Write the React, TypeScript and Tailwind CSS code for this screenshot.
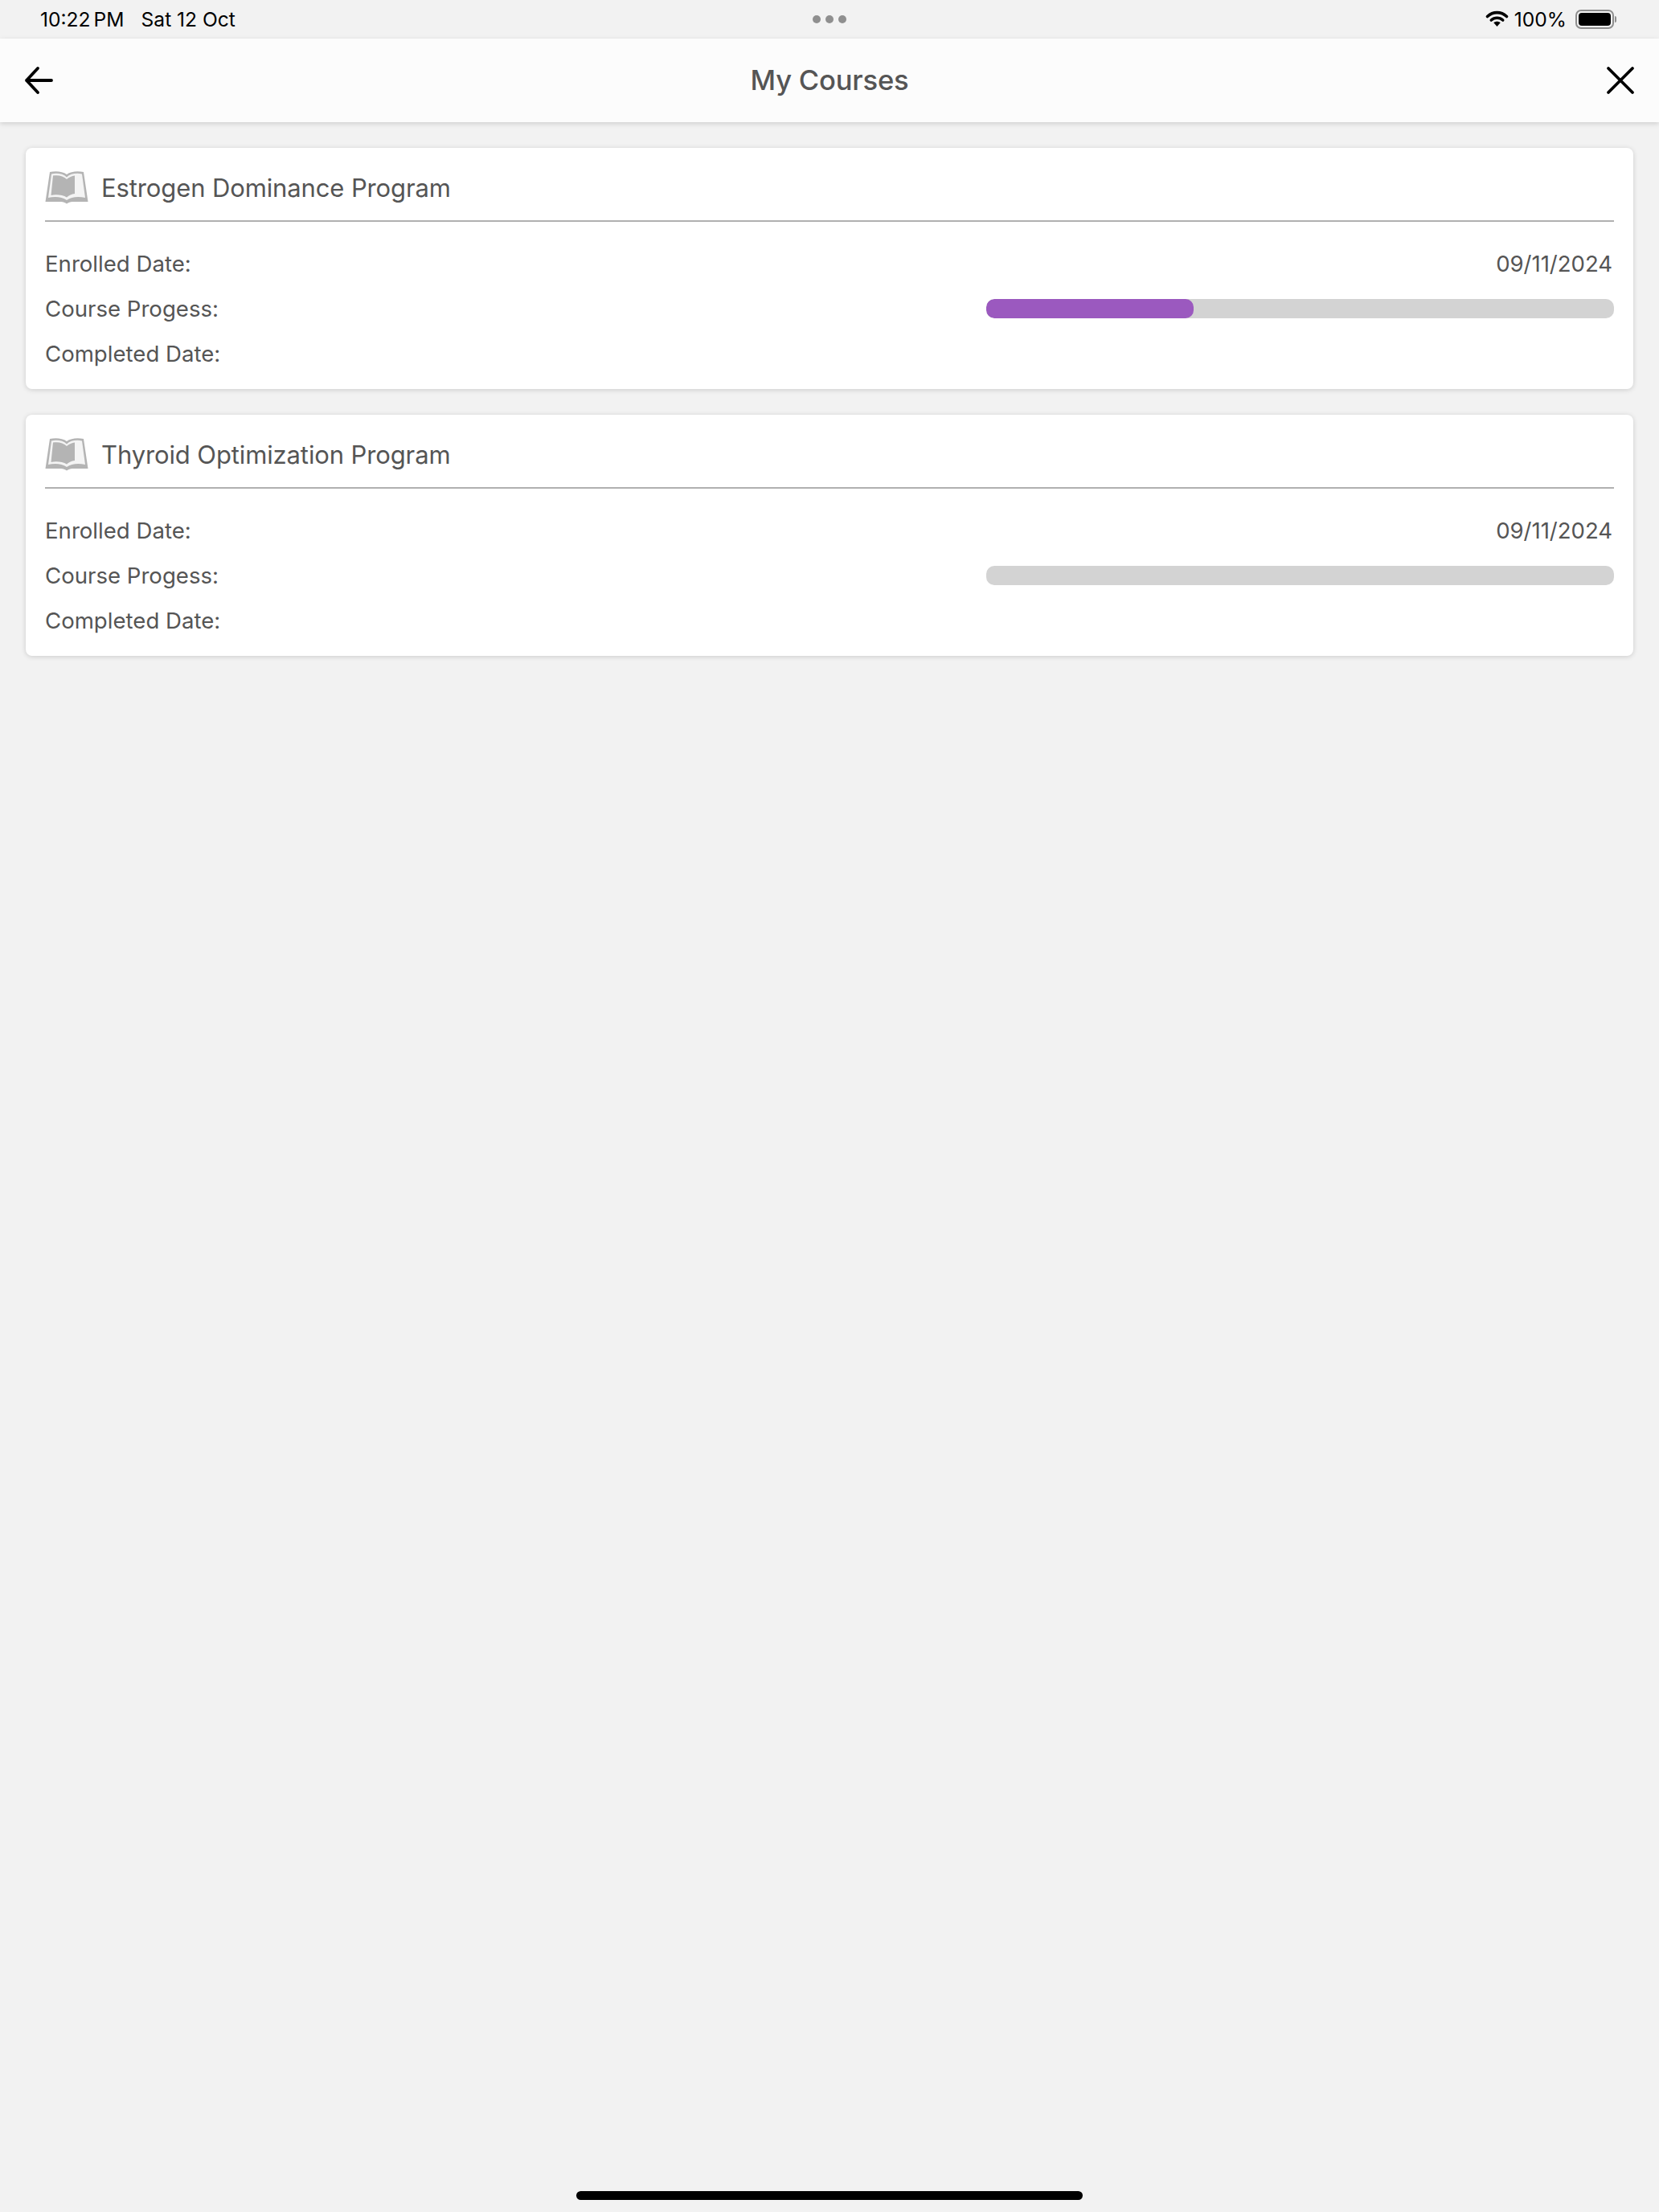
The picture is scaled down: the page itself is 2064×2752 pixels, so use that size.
const courses = [
  { title: "Estrogen Dominance Program", enrolled: "09/11/2024", progress: 33 },
  { title: "Thyroid Optimization Program", enrolled: "09/11/2024", progress: 0 },
];

function BookIcon() {
  return (
    <svg width="54" height="42" viewBox="0 0 54 42" className="mt-[5px] shrink-0">
      <path
        d="M6 2C13 0.5 22 1 27 5C32 1 41 0.5 48 2L53.5 39H34C31.5 39 29 40 27 41.5C25 40 22.5 39 20 39H0.5Z"
        fill="#b4b4b4"
      />
      <path
        d="M8 4.5C14.5 3 22.5 4 27 8.5C31.5 4 39.5 3 46 4.5L50 34C42 32 33 32.5 27 37C21 32.5 12 32 4 34Z"
        fill="#f4f4f4"
      />
      <path
        d="M10 6.5C16 5.5 23 6.5 27 11C30 8.5 33.5 7 37 6.5V29C33 29.5 30 31 27 33.5C22 30.5 14 29.5 7.5 31Z"
        fill="#b4b4b4"
      />
    </svg>
  );
}

function StatusBar() {
  return (
    <div className="relative flex h-12 items-center justify-between pl-[50px] pr-[53px] text-[24.6px] text-black">
      <div className="flex gap-[21px]">
        <span>
          10:22<span className="ml-[4px]">PM</span>
        </span>
        <span>Sat 12 Oct</span>
      </div>
      <div className="absolute left-[1011px] top-[19px] flex gap-[6px]">
        <span className="h-[10px] w-[10px] rounded-full bg-[#8f8f8f]" />
        <span className="h-[10px] w-[10px] rounded-full bg-[#8f8f8f]" />
        <span className="h-[10px] w-[10px] rounded-full bg-[#8f8f8f]" />
      </div>
      <div className="flex items-center gap-[7px]">
        <svg width="29" height="21" viewBox="0 0 28 21">
          <path d="M2 7.5C9 1 19 1 26 7.5" fill="none" stroke="#000" strokeWidth="3.6" strokeLinecap="round" />
          <path d="M6.8 12C11 8.3 17 8.3 21.2 12" fill="none" stroke="#000" strokeWidth="3.6" strokeLinecap="round" />
          <path d="M9.8 15.2C12.2 13.2 15.8 13.2 18.2 15.2L14 20Z" fill="#000" />
        </svg>
        <span className="mr-[4px]">100%</span>
        <div className="flex items-center gap-[1px]">
          <div className="flex h-[24px] w-[48px] items-center justify-center rounded-[7px] border-2 border-[#8e8e8e] p-[2px]">
            <div className="h-full w-full rounded-[4px] bg-black" />
          </div>
          <div className="h-[8px] w-[2px] rounded-r-full bg-[#8e8e8e]" />
        </div>
      </div>
    </div>
  );
}

function Header() {
  return (
    <div className="flex h-[104px] items-center justify-between bg-[#fcfcfc] px-[30px] shadow-[0_2px_6px_rgba(0,0,0,0.15)]">
      <svg width="36" height="36" viewBox="0 0 36 36" fill="none" stroke="#000" strokeWidth="3.8" strokeLinecap="round" strokeLinejoin="round">
        <path d="M34 18H3M17 3L3 18L17 33" />
      </svg>
      <h1 className="text-[34.6px] tracking-[-0.2px] text-[#555555] [font-weight:450]">My Courses</h1>
      <svg width="36" height="36" viewBox="0 0 36 36" fill="none" stroke="#000" strokeWidth="3.8" strokeLinecap="round">
        <path d="M3 3L33 33M33 3L3 33" />
      </svg>
    </div>
  );
}

function CourseCard({ title, enrolled, progress }: { title: string; enrolled: string; progress: number }) {
  return (
    <div className="flex h-[300px] flex-col rounded-[8px] bg-white px-[24px] shadow-[0_1px_6px_rgba(0,0,0,0.16)]">
      <div className="flex h-[92px] shrink-0 items-center gap-[16px] border-b-2 border-[#b0b0b0] pt-[2px]">
        <BookIcon />
        <span className="pt-[8px] text-[31px] tracking-[-0.12px] text-[#555555]">{title}</span>
      </div>
      <div className="flex flex-col pt-[24px] text-[27.6px] text-[#555555]">
        <div className="flex h-[56px] items-center justify-between">
          <span className="pt-[1px]">Enrolled Date:</span>
          <span className="pr-[2px] pt-[1px] tracking-[-0.05px]">{enrolled}</span>
        </div>
        <div className="flex h-[56px] items-center justify-between">
          <span className="pt-[1px]">Course Progess:</span>
          <div className="h-[24px] w-[781px] overflow-hidden rounded-[10px] bg-[#d3d3d3]">
            <div className="h-full rounded-[10px] bg-[#9b59bf]" style={{ width: `${progress}%` }} />
          </div>
        </div>
        <div className="flex h-[56px] items-center">
          <span className="pt-[1px]">Completed Date:</span>
        </div>
      </div>
    </div>
  );
}

export default function App() {
  return (
    <div className="flex h-[2752px] w-[2064px] flex-col bg-[#f2f2f2] font-['Inter',sans-serif]">
      <StatusBar />
      <Header />
      <div className="flex flex-1 flex-col gap-[32px] px-[32px] pt-[32px]">
        {courses.map((course) => (
          <CourseCard key={course.title} {...course} />
        ))}
      </div>
      <div className="flex justify-center pb-[15px]">
        <div className="h-[11px] w-[630px] rounded-full bg-black" />
      </div>
    </div>
  );
}
